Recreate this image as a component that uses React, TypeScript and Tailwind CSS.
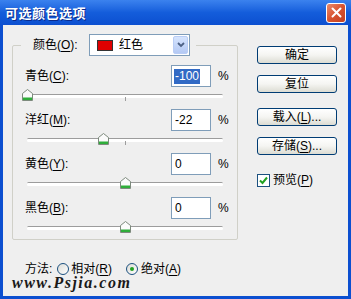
import React from 'react';

const font = { fontFamily: '"Liberation Sans", "Noto Sans CJK SC", sans-serif' };

// accelerator label: 青色(C): with the letter underlined
function Accel({ text, k, tail = '' }: { text: string; k: string; tail?: string }) {
  return (
    <span>
      {text}(<span className="underline underline-offset-2">{k}</span>){tail}
    </span>
  );
}

function Thumb() {
  return (
    <svg width="11" height="12" viewBox="0 0 11 12">
      <path d="M0.5 4.5 L5.5 0.5 L10.5 4.5 L10.5 11.5 L0.5 11.5 Z" fill="#fbfbfb" stroke="#7d8a7d" />
      <rect x="1" y="8.5" width="9" height="2.5" fill="#2fae3a" />
    </svg>
  );
}

function Slider({ value }: { value: number }) {
  const left = ((value + 100) / 200) * 196;
  return (
    <div className="h-[22px] pt-[7px] pl-[2px]">
      <div className="relative w-[196px] h-[3px] rounded-full border-t border-[#9c9c9c] bg-white shadow-[0_1px_0_#ffffff]">
        <div className="absolute left-[98px] top-[2px] w-px h-[4px] bg-[#9c9c9c]" />
        <div className="absolute top-[-6px]" style={{ left: left - 5 }}>
          <Thumb />
        </div>
      </div>
    </div>
  );
}

function Row({ label, k, value, selected }: { label: string; k: string; value: string; selected?: boolean }) {
  return (
    <>
      <div className="flex items-center h-[22px]">
        <div className="w-[146px] text-[12px] text-black">
          <Accel text={label} k={k} tail=":" />
        </div>
        <div className="w-[40px] h-[22px] border border-[#7f9db9] bg-white flex items-center pl-[2px] text-[12px]">
          {selected ? <span className="bg-[#316ac5] text-white px-[1px] leading-[15px]">{value}</span> : <span className="pl-[1px]">{value}</span>}
        </div>
        <div className="ml-[7px] text-[12px]">%</div>
      </div>
      <Slider value={parseInt(value, 10)} />
    </>
  );
}

function Btn({ children }: { children: React.ReactNode }) {
  return (
    <div className="w-[80px] h-[18px] rounded-[3px] border border-[#003c74] bg-gradient-to-b from-white via-[#f5f5f2] to-[#dcdcd3] flex items-center justify-center text-[12px] text-black">
      {children}
    </div>
  );
}

function Radio({ checked }: { checked?: boolean }) {
  return (
    <div className="w-[12px] h-[12px] rounded-full border border-[#1c5180] bg-gradient-to-br from-[#dcdcd7] to-white flex items-center justify-center">
      {checked && <div className="w-[4px] h-[4px] rounded-full bg-[#21a121]" />}
    </div>
  );
}

export default function App() {
  return (
    <div className="w-[351px] h-[299px] flex flex-col bg-[#efefef] overflow-hidden" style={font}>
      {/* Title bar */}
      <div className="h-[25px] flex items-center justify-between pl-[5px] pr-[5px] bg-gradient-to-b from-[#3b82ee] via-[#145ddb] to-[#0c4fd0]">
        <span className="text-white font-bold text-[13px] tracking-[0.5px] [text-shadow:1px_1px_#0a2a8a]" style={{ fontFamily: '"Noto Sans CJK SC", sans-serif' }}>
          可选颜色选项
        </span>
        <div className="w-[20px] h-[20px] rounded-[3px] border border-white bg-gradient-to-br from-[#e98a6c] via-[#d8532f] to-[#c24022] flex items-center justify-center">
          <svg width="11" height="11" viewBox="0 0 11 11">
            <path d="M1.5 1.5 L9.5 9.5 M9.5 1.5 L1.5 9.5" stroke="white" strokeWidth="2" strokeLinecap="round" />
          </svg>
        </div>
      </div>

      {/* Body */}
      <div className="relative flex-1 flex border-x-[3px] border-b-[3px] border-[#0c4fd0]">
        <div className="w-[240px] pl-[9px] pt-[9px]">
          <fieldset className="w-[226px] h-[206px] border border-[#d0d0c8] rounded-[2px]">
            <legend className="ml-[8px] pl-[12px] pr-[6px]">
              <div className="flex items-center h-[22px]">
                <span className="w-[56px] text-[12px]">
                  <Accel text="颜色" k="O" tail=":" />
                </span>
                <div className="w-[101px] h-[22px] border border-[#7f9db9] bg-white flex items-center pl-[7px] pr-[1px]">
                  <div className="w-[16px] h-[11px] bg-[#e00000] border border-[#333]" />
                  <span className="ml-[6px] text-[12px] flex-1">红色</span>
                  <div className="w-[15px] h-[18px] rounded-[2px] bg-gradient-to-b from-[#d6e4fd] to-[#b4c9f4] border border-[#b9cdf5] flex items-center justify-center">
                    <svg width="8" height="6" viewBox="0 0 8 6">
                      <path d="M1 1 L4 4 L7 1" fill="none" stroke="#4d6185" strokeWidth="1.8" />
                    </svg>
                  </div>
                </div>
              </div>
            </legend>
            <div className="pl-[12px] pt-[9px]">
              <Row label="青色" k="C" value="-100" selected />
              <Row label="洋红" k="M" value="-22" />
              <Row label="黄色" k="Y" value="0" />
              <Row label="黑色" k="B" value="0" />
            </div>
          </fieldset>

          <div className="flex items-center h-[14px] leading-[14px] mt-[22px] pl-[13px] text-[12px]">
            <span>方法:</span>
            <div className="ml-[5px]"><Radio /></div>
            <span className="ml-[2px]"><Accel text="相对" k="R" /></span>
            <div className="ml-[14px]"><Radio checked /></div>
            <span className="ml-[3px]"><Accel text="绝对" k="A" /></span>
          </div>
        </div>

        <div className="pl-[14px] pt-[21px] flex flex-col">
          <Btn>确定</Btn>
          <div className="mt-[11px]"><Btn>复位</Btn></div>
          <div className="mt-[15px]"><Btn><Accel text="载入" k="L" tail="..." /></Btn></div>
          <div className="mt-[11px]"><Btn><Accel text="存储" k="S" tail="..." /></Btn></div>
          <div className="mt-[16px] flex items-center text-[12px]">
            <div className="w-[13px] h-[13px] border border-[#1c5180] bg-white flex items-center justify-center">
              <svg width="9" height="9" viewBox="0 0 9 9">
                <path d="M1 4.5 L3.5 7 L8 1.5" fill="none" stroke="#21a121" strokeWidth="2" />
              </svg>
            </div>
            <span className="ml-[3px]"><Accel text="预览" k="P" /></span>
          </div>
        </div>

        {/* watermark */}
        <div className="absolute left-[9px] top-[252px] leading-[12px] text-[16px] font-bold italic tracking-[1.5px] text-[#1a1a1a]" style={{ fontFamily: '"Liberation Serif", serif' }}>
          www.Psjia.com
        </div>
      </div>
    </div>
  );
}
